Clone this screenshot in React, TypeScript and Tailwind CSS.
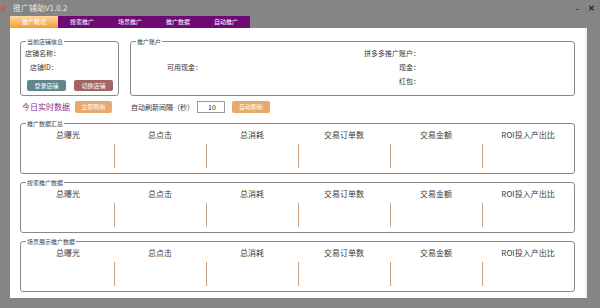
import React from 'react';

const tabs = ['推广概况', '搜索推广', '场景推广', '推广数据', '自动推广'];
const columns = ['总曝光', '总点击', '总消耗', '交易订单数', '交易金额', 'ROI投入产出比'];

function GroupBox({
  title,
  className,
  children,
}: {
  title: string;
  className?: string;
  children?: React.ReactNode;
}) {
  return (
    <div className={`relative rounded-[3px] border border-[#8a8a8a] ${className ?? ''}`}>
      <span className="absolute -top-[4px] left-[5px] bg-white px-[1px] text-[6px] leading-[7px] text-[#444]">
        {title}
      </span>
      {children}
    </div>
  );
}

function DataGroup({ title }: { title: string }) {
  return (
    <GroupBox title={title} className="mx-[10px] h-[51px]">
      <div className="grid grid-cols-6 pl-[1px]">
        {columns.map((c, i) => (
          <div key={c} className="flex flex-col items-center">
            <div className="pt-[6px] text-[8px] leading-[10px] text-[#3a3a3a]">{c}</div>
            <div className="flex w-full">
              <div
                className={`mt-[4px] h-[24px] w-[1px] ${i === 0 ? '' : 'bg-[#c9a488]'}`}
              />
            </div>
          </div>
        ))}
      </div>
    </GroupBox>
  );
}

export default function App() {
  return (
    <div
      className="flex h-[308px] w-[600px] flex-col bg-[#858585]"
      style={{ fontFamily: '"Noto Sans CJK SC", "Noto Sans", sans-serif' }}
    >
      {/* title bar */}
      <div className="flex h-[16px] items-center">
        <div className="ml-[1px] h-[5px] w-[4px] rounded-full bg-[#d9534f]" />
        <span className="ml-[8px] text-[8px] leading-none text-[#e4e4e4]">推广辅助V1.0.2</span>
        <div className="ml-auto mr-[5px] flex items-center gap-[9px] text-[#1e1e1e]">
          <span className="mt-[3px] text-[7px] font-bold leading-none">–</span>
          <span className="text-[8px] font-bold leading-none">✕</span>
        </div>
      </div>

      {/* tabs */}
      <div className="ml-[10px] flex h-[12px]">
        {tabs.map((t, i) => (
          <div
            key={t}
            className={`flex w-[48px] items-center justify-center text-[6px] leading-none text-white ${
              i === 0 ? 'bg-gradient-to-b from-[#fdd9a0] to-[#f59a2a]' : 'bg-[#6f0a73]'
            }`}
          >
            {t}
          </div>
        ))}
      </div>

      {/* content */}
      <div className="ml-[10px] mr-[13px] h-[270px] border-r-2 border-[#f0f0f0] bg-white pt-[13px]">
        <div className="flex px-[10px]">
          <GroupBox title="当前店铺信息" className="h-[55px] w-[99px]">
            <div className="pl-[4px] pt-[6px] text-[7px] leading-[10px] text-[#333]">店铺名称：</div>
            <div className="pl-[9px] pt-[4px] text-[7px] leading-[10px] text-[#333]">店铺ID：</div>
            <div className="mt-[8px] flex gap-[8px] pl-[6px]">
              <div className="flex h-[11px] w-[39px] items-center justify-center rounded-[2px] bg-[#5e878c] text-[6px] leading-none text-white">
                登录店铺
              </div>
              <div className="flex h-[11px] w-[39px] items-center justify-center rounded-[2px] bg-[#a46464] text-[6px] leading-none text-white">
                切换店铺
              </div>
            </div>
          </GroupBox>
          <GroupBox title="推广账户" className="ml-[11px] h-[55px] flex-1">
            <div className="flex pt-[6px] text-[7px] leading-[10px] text-[#333]">
              <div className="ml-[36px] pt-[14px]">可用现金：</div>
              <div className="ml-auto mr-[154px] flex flex-col items-end gap-[4px]">
                <div>拼多多推广账户：</div>
                <div>现金：</div>
                <div>红包：</div>
              </div>
            </div>
          </GroupBox>
        </div>

        <div className="mt-[5px] flex h-[12px] items-center pl-[12px]">
          <span className="text-[8px] leading-none text-[#8a2b90]">今日实时数据</span>
          <div className="ml-[5px] flex h-[12px] w-[37px] items-center justify-center rounded-[2px] bg-[#e7a96c] text-[6px] leading-none text-white">
            立即刷新
          </div>
          <span className="ml-[19px] text-[7px] leading-none text-[#333]">自动刷新间隔（秒）</span>
          <div className="ml-[3px] flex h-[12px] w-[28px] items-center border border-[#999] pl-[10px] text-[7px] leading-none text-[#222]">
            10
          </div>
          <div className="ml-[7px] flex h-[12px] w-[38px] items-center justify-center rounded-[2px] bg-[#e7a96c] text-[6px] leading-none text-white">
            自动刷新
          </div>
        </div>

        <div className="mt-[10px] flex flex-col gap-[8px]">
          <DataGroup title="推广数据汇总" />
          <DataGroup title="搜索推广数据" />
          <DataGroup title="场景展示推广数据" />
        </div>
      </div>
    </div>
  );
}
